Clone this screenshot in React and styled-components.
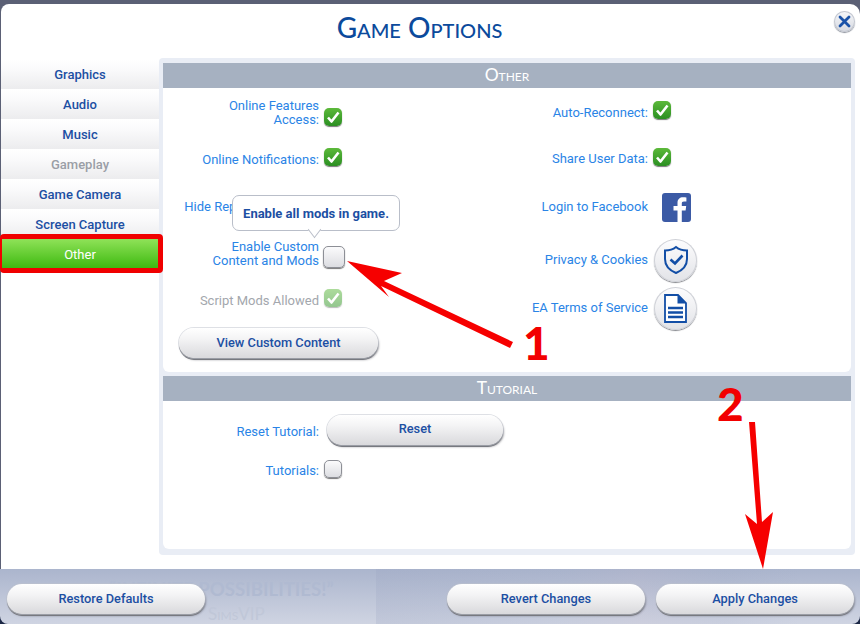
import React from "react";
import styled, { createGlobalStyle, css } from "styled-components";

const Global = createGlobalStyle`
  html, body { margin: 0; padding: 0; background: #5b6075; }
  #root { width: 860px; height: 624px; }
`;

const Page = styled.div`
  position: relative;
  width: 860px;
  height: 624px;
  overflow: hidden;
  padding-top: 4px;
  box-sizing: border-box;
  display: flex;
  flex-direction: column;
  font-family: Roboto, "Liberation Sans", sans-serif;
  background: linear-gradient(#5b6075 0 92%, #1b2745 92%);
`;

const Dialog = styled.div`
  position: relative;
  height: 565px;
  margin-left: 1px;
  background: #fff;
  border-radius: 8px 10px 0 0;
  display: flex;
  flex-direction: column;
  flex: none;
`;

const Title = styled.h1`
  margin: 0;
  height: 54px;
  display: flex;
  align-items: center;
  justify-content: center;
  padding-right: 22px;
  padding-bottom: 8px;
  box-sizing: border-box;
  font: 500 28px Lato, "Liberation Sans", sans-serif;
  font-variant: small-caps;
  color: #0b4a9c;
`;

const CloseButton = styled.div`
  position: absolute;
  top: 7px;
  right: 5px;
  width: 21px;
  height: 21px;
  border-radius: 50%;
  background: linear-gradient(#f6f7fa, #d6d9e0);
  box-shadow: inset 0 0 0 1px #c3c7d0, 0 1px 1px #8a8f9a;
  display: flex;
  align-items: center;
  justify-content: center;
`;

const Content = styled.div`
  display: flex;
  flex: 1;
  min-height: 0;
`;

const Sidebar = styled.nav`
  width: 158px;
  padding-top: 1px;
  flex: none;
`;

const activeTab = css`
  position: relative;
  height: 30px;
  margin: 0 1px;
  color: #fff;
  font-weight: 400;
  background: linear-gradient(#8fe258, #3bb80e);
  &::after {
    content: "";
    position: absolute;
    left: -2px;
    right: -5px;
    top: -5px;
    bottom: -4px;
    border-style: solid;
    border-color: #f00000;
    border-width: 5px 5px 5px 2px;
    border-radius: 4px;
    box-sizing: border-box;
  }
`;

const Tab = styled.div`
  height: 30px;
  display: flex;
  align-items: center;
  justify-content: center;
  font-size: 13px;
  font-weight: 500;
  color: ${(p) => (p.$muted ? "#9a9ea6" : "#1c4fa3")};
  background: linear-gradient(#ffffff, #fbfbfc 30%, #ececee);
  ${(p) => p.$active && activeTab}
`;

const Panel = styled.main`
  width: 696px;
  height: 497px;
  padding: 5px 4px 6px;
  box-sizing: border-box;
  background: #e9edf5;
  border-radius: 4px;
  display: flex;
  flex-direction: column;
  gap: 4px;
`;

const SectionHeader = styled.h2`
  margin: 0;
  height: 25px;
  padding-bottom: 2px;
  box-sizing: border-box;
  background: #a6b1c1;
  display: flex;
  align-items: center;
  justify-content: center;
  font: 400 17.4px Lato, "Liberation Sans", sans-serif;
  font-variant: small-caps;
  color: #fff;
`;

const Section = styled.section`
  display: flex;
  flex-direction: column;
  height: ${(p) => p.$h}px;
  background: #fff;
  border-radius: 0 0 6px 6px;
`;

const Columns = styled.div`
  display: grid;
  grid-template-columns: 329px 1fr;
`;

const Column = styled.div`
  display: flex;
  flex-direction: column;
  padding-top: ${(p) => p.$top || 0}px;
`;

const Row = styled.div`
  position: relative;
  height: ${(p) => p.$h || 47}px;
  display: flex;
  align-items: center;
  gap: 5px;
`;

const Label = styled.span`
  width: 156px;
  flex: none;
  text-align: right;
  font-size: 13px;
  line-height: 14px;
  color: ${(p) => (p.$muted ? "#a3a7ad" : "#2a84e6")};
`;

const CheckBox = styled.span`
  flex: none;
  box-sizing: border-box;
  width: ${(p) => (p.$large ? 22 : 18)}px;
  height: ${(p) => (p.$large ? 22 : 18)}px;
  margin-left: ${(p) => (p.$large ? -1 : 0)}px;
  margin-top: ${(p) => (p.$shift > 0 ? p.$shift * 2 : 0)}px;
  margin-bottom: ${(p) => (p.$shift < 0 ? -p.$shift * 2 : 0)}px;
  border-radius: 5px;
  display: flex;
  align-items: center;
  justify-content: center;
  opacity: ${(p) => (p.$disabled ? 0.5 : 1)};
  ${(p) =>
    p.$checked
      ? css`
          background: linear-gradient(#5cb93a, #2b8f22);
          box-shadow: 0 1px 1px #777;
        `
      : css`
          background: linear-gradient(#fbfbfc, #dcdde1);
          border: 1px solid #8d8f96;
          box-shadow: 0 1px 1px #777;
        `}
`;

const Tooltip = styled.div`
  position: absolute;
  z-index: 2;
  left: 69px;
  top: -35px;
  width: 168px;
  height: 36px;
  box-sizing: border-box;
  background: #fff;
  border: 1px solid #b9bec9;
  border-radius: 7px;
  display: flex;
  align-items: center;
  justify-content: center;
  font-size: 13px;
  font-weight: 700;
  color: #1c4fa3;
  &::after {
    content: "";
    position: absolute;
    left: 76px;
    bottom: -5px;
    width: 10px;
    height: 10px;
    background: #fff;
    border-right: 1px solid #b9bec9;
    border-bottom: 1px solid #b9bec9;
    transform: rotate(45deg) skew(8deg, 8deg);
  }
`;

const Pill = styled.button`
  width: ${(p) => p.$w}px;
  height: 30px;
  flex: none;
  padding: 0 0 ${(p) => p.$lift || 1}px;
  margin: ${(p) => p.$margin || 0};
  border: 0;
  border-radius: 15px;
  font: 500 12.8px Roboto, "Liberation Sans", sans-serif;
  color: #1c4fa3;
  background: linear-gradient(#ffffff, #f4f4f5 35%, #d9d9dc);
  box-shadow: 0 0 0 1px rgba(190, 194, 204, 0.5), 0 2px 0 #77797f, 1px 2px 2px rgba(60, 60, 70, 0.5);
`;

const FacebookTile = styled.span`
  flex: none;
  width: 29px;
  height: 29px;
  margin-left: 9px;
  border-radius: 3px;
  background: #3b5aa5;
  overflow: hidden;
  display: flex;
`;

const RoundIcon = styled.span`
  flex: none;
  width: 43px;
  height: 43px;
  margin-left: 1px;
  box-sizing: border-box;
  border-radius: 50%;
  background: linear-gradient(#fdfdfe, #e2e3e7);
  box-shadow: inset 0 0 0 1px #cfd1d7, 0 1px 1px #85878d;
  display: flex;
  align-items: center;
  justify-content: center;
`;

const Footer = styled.footer`
  position: relative;
  flex: 1;
  display: flex;
  align-items: center;
  justify-content: space-between;
  padding: 5px 6px 0 7px;
  overflow: hidden;
  border-radius: 0 0 8px 8px;
  background:
    linear-gradient(90deg, transparent 376px, rgba(150,160,190,.22) 376px, rgba(150,160,190,.1) 560px, rgba(190,170,190,.12) 640px, rgba(150,160,190,.1) 725px, transparent 800px),
    linear-gradient(#abb5cd, #cfd4e2);
`;

const FooterGroup = styled.div`
  position: relative;
  display: flex;
  gap: 11px;
`;

const BackdropHeadline = styled.span`
  position: absolute;
  left: 109px;
  top: 9px;
  font: 700 18.6px Lato, "Liberation Sans", sans-serif;
  white-space: nowrap;
  color: #b0bad1;
`;

const BackdropCredit = styled.span`
  position: absolute;
  left: 208px;
  top: 34px;
  font: 400 17px Lato, "Liberation Sans", sans-serif;
  font-variant: small-caps;
  color: #c0c7d8;
`;

const Scribble = styled.svg`
  position: absolute;
  left: 0;
  top: 0;
  z-index: 3;
  pointer-events: none;
`;

const StepNumber = styled.span`
  position: absolute;
  z-index: 3;
  left: ${(p) => p.$x}px;
  top: ${(p) => p.$y}px;
  font: 900 46px "Lato", "DejaVu Sans", sans-serif;
  line-height: 46px;
  color: #f20000;
`;

const Tick = () => (
  <svg width="14" height="14" viewBox="0 0 14 14">
    <path d="M2 7.5 L5.5 11.5 L12.5 2.5" fill="none" stroke="#fff" strokeWidth="2.6" strokeLinejoin="round" />
  </svg>
);

const Check = ({ on, ...rest }) => (
  <CheckBox $checked={on} {...rest}>
    {on && <Tick />}
  </CheckBox>
);

const Shield = () => (
  <svg width="26" height="30" viewBox="0 0 26 30">
    <path
      d="M13 2 C16 4.5 20 5.5 24 5.5 V14 C24 21 19 25.5 13 28 C7 25.5 2 21 2 14 V5.5 C6 5.5 10 4.5 13 2 Z"
      fill="none"
      stroke="#124ea6"
      strokeWidth="2"
    />
    <path d="M7.5 14.5 L12 18.5 L19.5 10.5" fill="none" stroke="#124ea6" strokeWidth="2.6" />
  </svg>
);

const Doc = () => (
  <svg width="23" height="29" viewBox="0 0 23 29">
    <path d="M1 1 H14 L22 9 V28 H1 Z" fill="#fff" stroke="#124ea6" strokeWidth="1.8" />
    <path d="M13.5 1 V9.5 H22 Z" fill="#124ea6" />
    <path d="M4 14 H19 M4 18.5 H19 M4 23 H19" stroke="#124ea6" strokeWidth="2.6" />
  </svg>
);

const Fb = () => (
  <svg width="29" height="29" viewBox="0 0 29 29">
    <path
      d="M15.5 29 V17.5 H11.5 V13 H15.5 V9.8 C15.5 6 17.8 4.2 21 4.2 C22.6 4.2 24 4.3 24.4 4.4 V8.4 H22 C20.2 8.4 19.8 9.2 19.8 10.5 V13 H24.2 L23.6 17.5 H19.8 V29 Z"
      fill="#fff"
    />
  </svg>
);

const tabs = ["Graphics", "Audio", "Music", "Gameplay", "Game Camera", "Screen Capture", "Other"];

export default function App() {
  return (
    <Page>
      <Global />
      <Dialog>
        <Title>Game Options</Title>
        <CloseButton>
          <svg width="13" height="13" viewBox="0 0 13 13">
            <path d="M2 2 L11 11 M11 2 L2 11" stroke="#1a52a8" strokeWidth="2.8" strokeLinecap="round" />
          </svg>
        </CloseButton>
        <Content>
          <Sidebar>
            {tabs.map((t) => (
              <Tab key={t} $muted={t === "Gameplay"} $active={t === "Other"}>
                {t}
              </Tab>
            ))}
          </Sidebar>
          <Panel>
            <div>
              <SectionHeader>Other</SectionHeader>
              <Section $h={284}>
                <Columns>
                  <Column $top={1}>
                    <Row>
                      <Label>
                        Online Features
                        <br />
                        Access:
                      </Label>
                      <Check on $shift={4.5} />
                    </Row>
                    <Row>
                      <Label>Online Notifications:</Label>
                      <Check on $shift={-2.5} />
                    </Row>
                    <Row>
                      <Label>Hide Reported Content:</Label>
                      <Check $shift={-2.5} />
                    </Row>
                    <Row>
                      <Tooltip>Enable all mods in game.</Tooltip>
                      <Label>
                        Enable Custom
                        <br />
                        Content and Mods
                      </Label>
                      <Check $large $shift={3.5} />
                    </Row>
                    <Row>
                      <Label $muted>Script Mods Allowed</Label>
                      <Check on $disabled $shift={-2.5} />
                    </Row>
                    <Pill $w={199} $margin="4px 0 0 16px">
                      View Custom Content
                    </Pill>
                  </Column>
                  <Column>
                    <Row $h={50}>
                      <Label>Auto-Reconnect:</Label>
                      <Check on $shift={-3} />
                    </Row>
                    <Row $h={42}>
                      <Label>Share User Data:</Label>
                      <Check on $shift={-2} />
                    </Row>
                    <Row $h={54}>
                      <Label>Login to Facebook</Label>
                      <FacebookTile>
                        <Fb />
                      </FacebookTile>
                    </Row>
                    <Row $h={52}>
                      <Label>Privacy &amp; Cookies</Label>
                      <RoundIcon>
                        <Shield />
                      </RoundIcon>
                    </Row>
                    <Row $h={44}>
                      <Label>EA Terms of Service</Label>
                      <RoundIcon>
                        <Doc />
                      </RoundIcon>
                    </Row>
                  </Column>
                </Columns>
              </Section>
            </div>
            <div>
              <SectionHeader>Tutorial</SectionHeader>
              <Section $h={148}>
                <Row $h={62}>
                  <Label>Reset Tutorial:</Label>
                  <Pill $w={176} $lift={3} $margin="0 0 4px 3px">
                    Reset
                  </Pill>
                </Row>
                <Row $h={16}>
                  <Label>Tutorials:</Label>
                  <Check $shift={-2} />
                </Row>
              </Section>
            </div>
          </Panel>
        </Content>
      </Dialog>
      <Footer>
        <BackdropHeadline>“INFINITE POSSIBILITIES!”</BackdropHeadline>
        <BackdropCredit>SimsVIP</BackdropCredit>
        <FooterGroup>
          <Pill $w={198}>Restore Defaults</Pill>
        </FooterGroup>
        <FooterGroup>
          <Pill $w={198}>Revert Changes</Pill>
          <Pill $w={198}>Apply Changes</Pill>
        </FooterGroup>
      </Footer>
      <Scribble width="860" height="624" viewBox="0 0 860 624">
        <path d="M347 261 L402 273 L384 281 L513 342 L510 348 L381 286 L389 297 Z" fill="#f60000" />
        <path d="M749 422 L755 422 L762 522 L773 512 L763 569 L745 514 L757 524 Z" fill="#f60000" />
      </Scribble>
      <StepNumber $x={523} $y={320}>1</StepNumber>
      <StepNumber $x={717} $y={381}>2</StepNumber>
    </Page>
  );
}
